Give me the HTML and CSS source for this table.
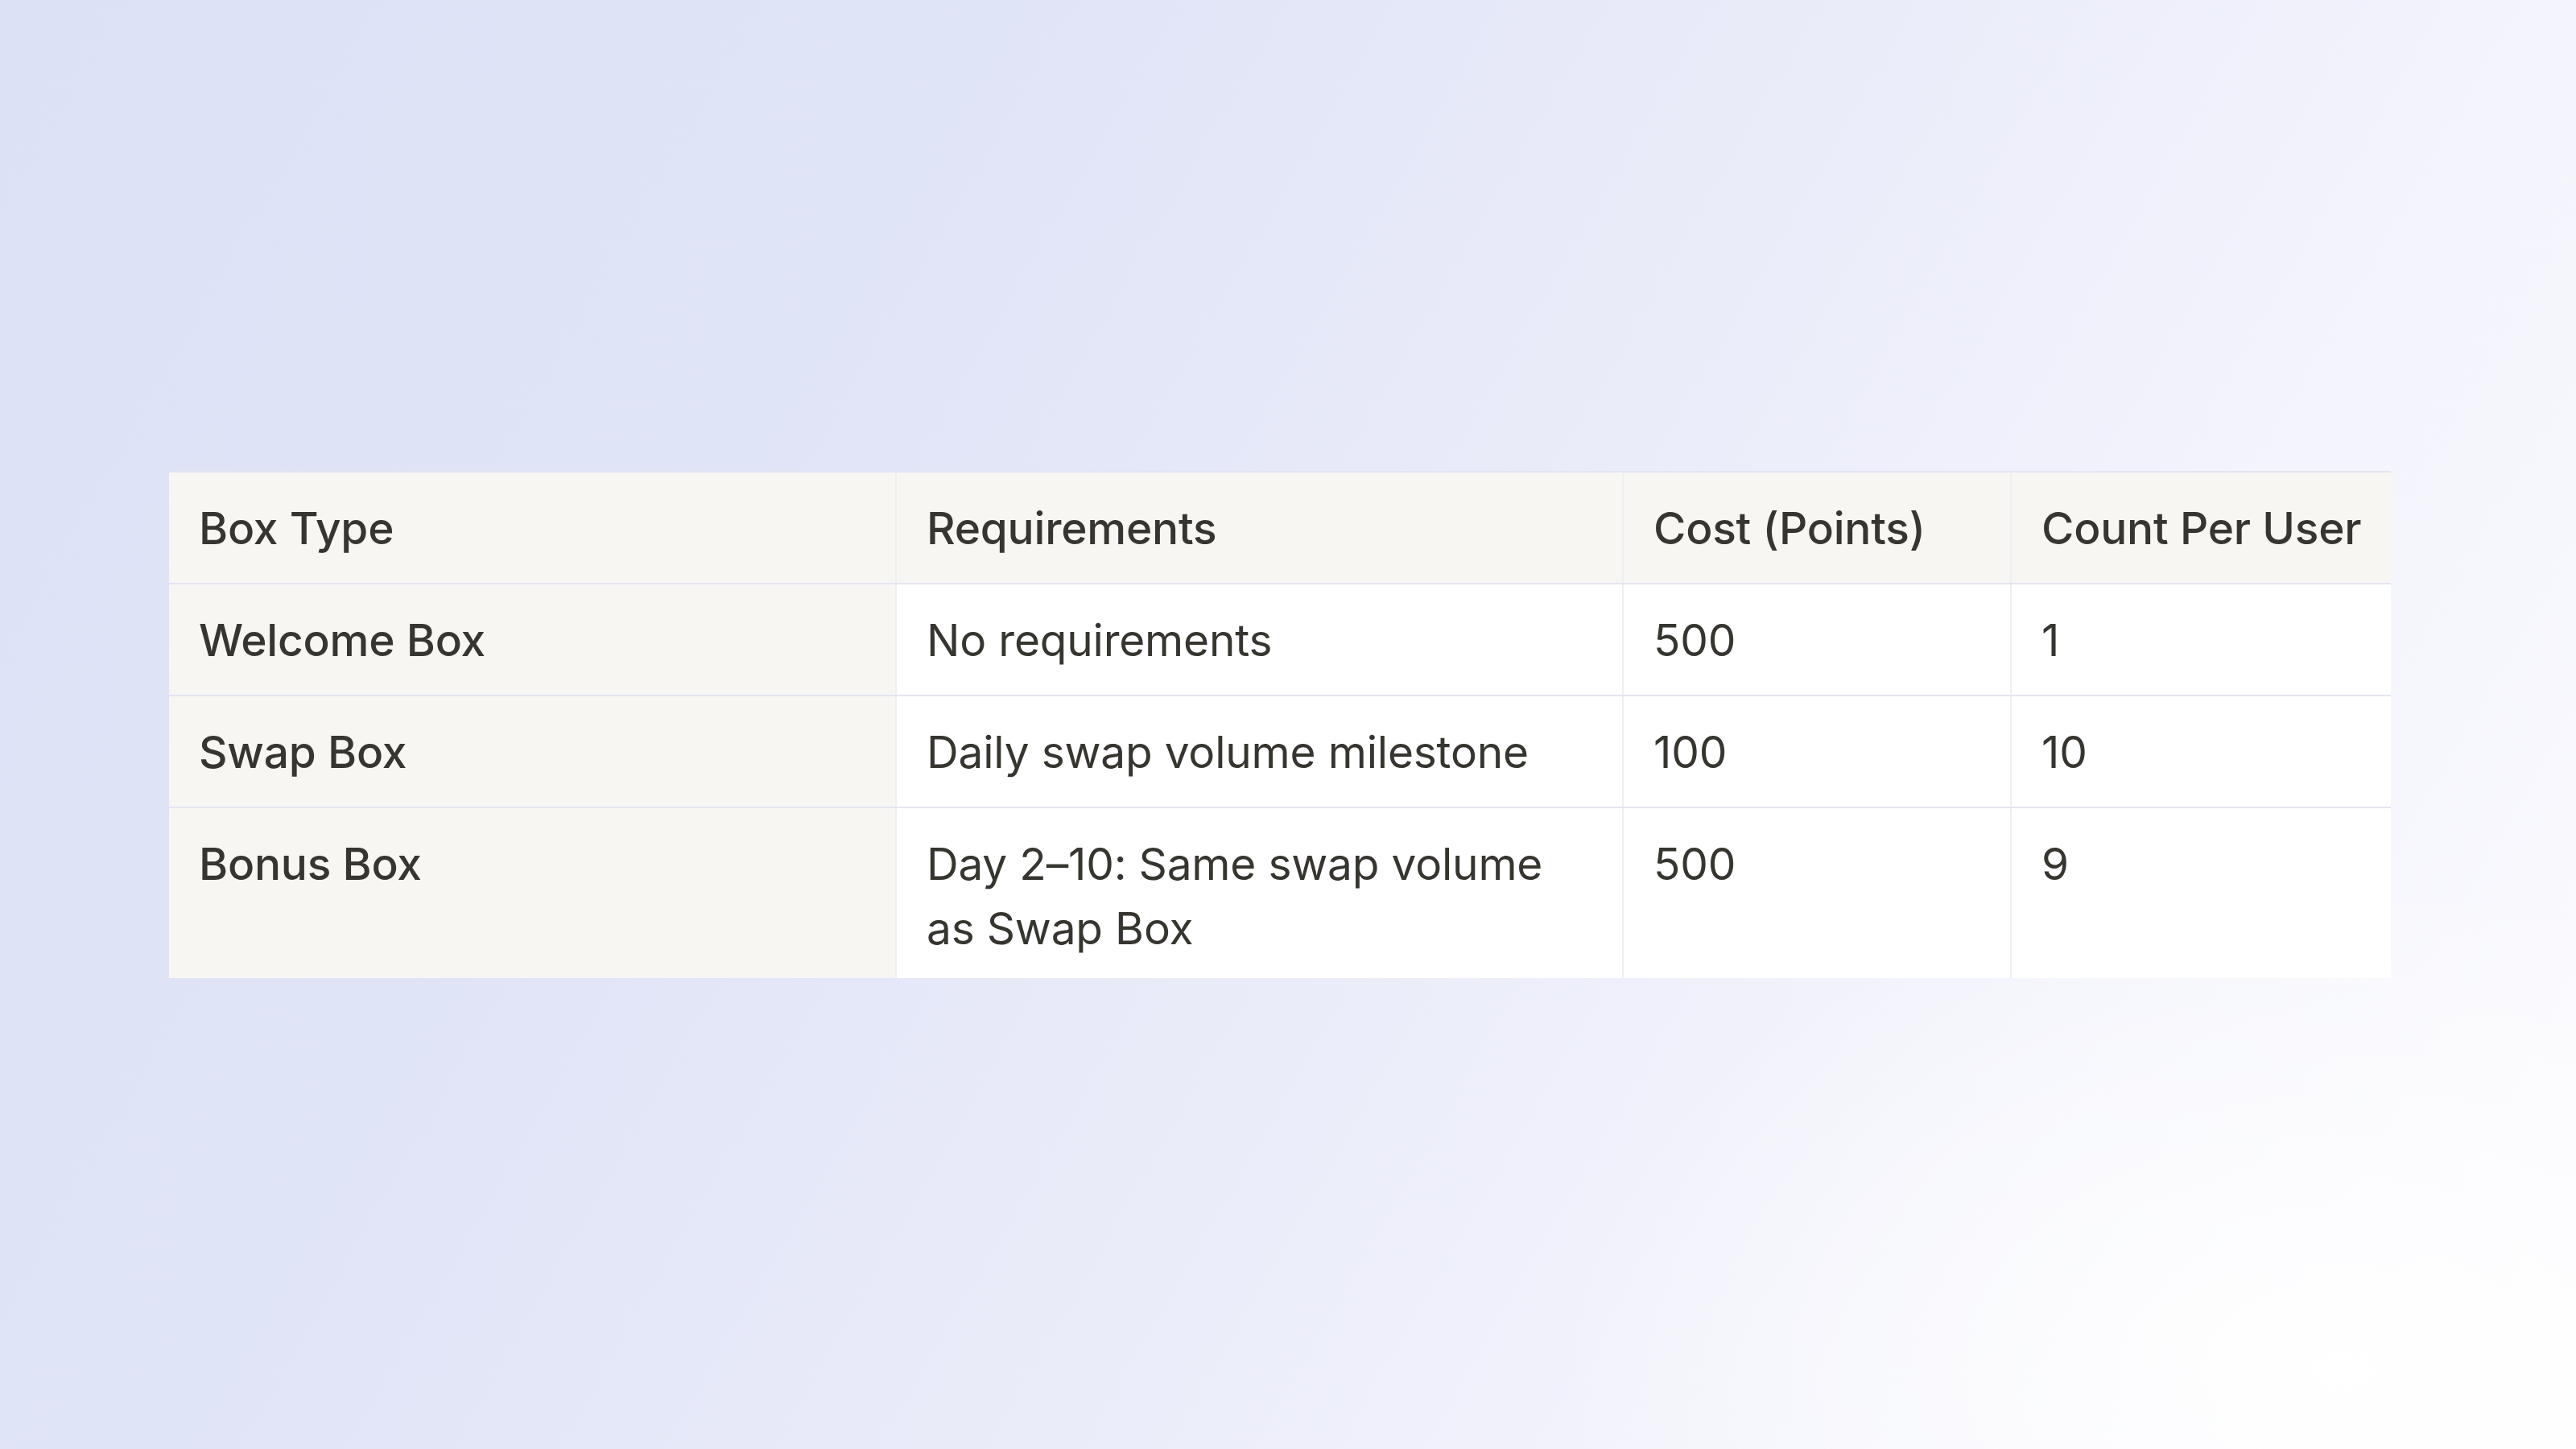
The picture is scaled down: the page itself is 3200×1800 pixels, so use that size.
FILE: index.html
```html
<!DOCTYPE html>
<html lang="en">
<head>
<meta charset="utf-8">
<title>Box Types</title>
<link rel="stylesheet" href="styles.css">
</head>
<body>
<main class="page">
  <div class="table-wrap">
    <table class="boxes">
      <colgroup>
        <col class="c-type">
        <col class="c-req">
        <col class="c-cost">
        <col class="c-count">
      </colgroup>
      <thead>
        <tr>
          <th>Box Type</th>
          <th>Requirements</th>
          <th>Cost (Points)</th>
          <th>Count Per User</th>
        </tr>
      </thead>
      <tbody>
        <tr>
          <th scope="row">Welcome Box</th>
          <td>No requirements</td>
          <td>500</td>
          <td>1</td>
        </tr>
        <tr>
          <th scope="row">Swap Box</th>
          <td>Daily swap volume milestone</td>
          <td>100</td>
          <td>10</td>
        </tr>
        <tr>
          <th scope="row">Bonus Box</th>
          <td>Day 2–10: Same swap volume as Swap Box</td>
          <td>500</td>
          <td>9</td>
        </tr>
      </tbody>
    </table>
  </div>
</main>
</body>
</html>
```

FILE: styles.css
```css
html, body {
  margin: 0;
  padding: 0;
}

body {
  width: 3200px;
  height: 1800px;
  overflow: hidden;
  background:
    radial-gradient(ellipse 1400px 900px at 2900px 1700px, rgba(255,255,255,0.95), rgba(255,255,255,0) 70%),
    linear-gradient(120deg, #dce2f6 0%, #e0e4f7 30%, #eaecf9 55%, #f3f4fc 75%, #fcfcff 100%);
  font-family: Inter, "Noto Sans", "Liberation Sans", sans-serif;
  color: #37352f;
}

.page {
  display: flex;
  padding: 585px 0 0 210px;
}

.table-wrap {
  width: 2760px;
  height: 630px;
  overflow: hidden;
  border-top: 2px solid #e3e5f3;
  box-sizing: border-box;
}

.boxes {
  width: 2760px;
  border-collapse: collapse;
  table-layout: fixed;
  font-size: 55px;
  line-height: 80px;
}

.c-type { width: 903px; }
.c-req { width: 903px; }
.c-cost { width: 482px; }
.c-count { width: 472px; }

.boxes th,
.boxes td {
  padding: 29px 30px 28px 37px;
  text-align: left;
  vertical-align: top;
  border-bottom: 2px solid #e4e5f2;
  border-right: 2px solid #eeeff3;
  background: #ffffff;
  font-weight: 400;
  letter-spacing: -0.2px;
}

.boxes thead th {
  background: #f7f6f3;
  font-weight: 500;
  white-space: nowrap;
}

.boxes tbody th {
  background: #f7f6f3;
  font-weight: 500;
}

.boxes tr > :last-child {
  border-right: none;
}

.boxes tbody tr:last-child > * {
  border-bottom: none;
}
```
